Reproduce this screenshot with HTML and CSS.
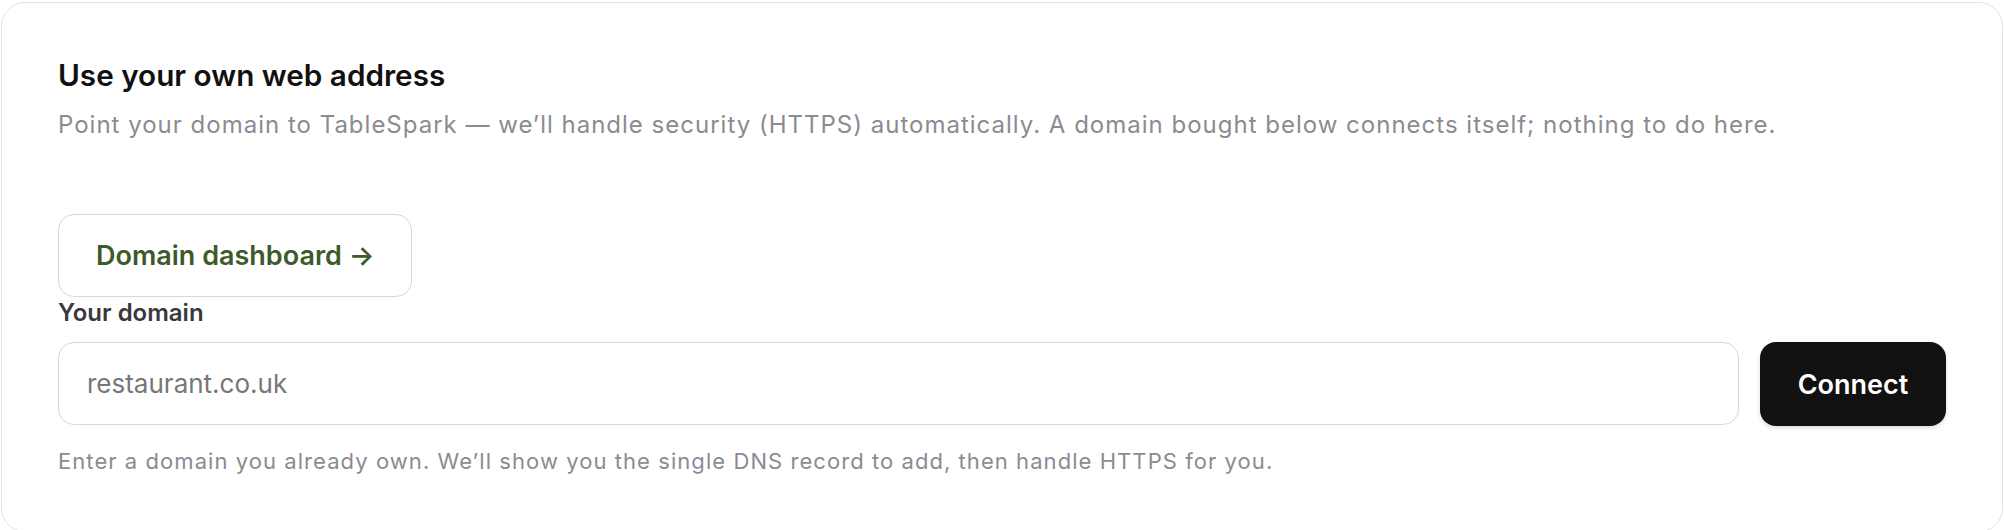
FILE: index.html
```html
<!DOCTYPE html>
<html lang="en">
<head>
<meta charset="utf-8">
<title>Use your own web address</title>
<link rel="stylesheet" href="styles.css">
</head>
<body>
<section class="card">
  <h2 class="title">Use your own web address</h2>
  <p class="subtitle">Point your domain to TableSpark — we’ll handle security (HTTPS) automatically. A domain bought below connects itself; nothing to do here.</p>
  <a class="dash-btn" href="#">Domain dashboard →</a>
  <label class="label" for="domain">Your domain</label>
  <div class="row">
    <input class="input" id="domain" type="text" placeholder="restaurant.co.uk">
    <button class="connect" type="button">Connect</button>
  </div>
  <p class="help">Enter a domain you already own. We’ll show you the single DNS record to add, then handle HTTPS for you.</p>
</section>
</body>
</html>
```
FILE: styles.css
```css
* { box-sizing: border-box; }
html, body { margin: 0; padding: 0; background: #ffffff; }
body {
  font-family: Inter, "Noto Sans", sans-serif;
  padding: 2px 1px 2px 1px;
}
.card {
  background: #ffffff;
  border: 1px solid #e4e4e7;
  border-radius: 24px;
  padding: 57px 56px 56px 56px;
  display: flex;
  flex-direction: column;
  align-items: flex-start;
}
.title {
  margin: 0;
  font-size: 29.7px;
  line-height: 30px;
  font-weight: 600;
  color: #111111;
}
.subtitle {
  margin: 21px 0 0 0;
  font-size: 24px;
  line-height: 28px;
  font-weight: 400;
  letter-spacing: 1px;
  color: #8b8b93;
}
.dash-btn {
  margin-top: 75px;
  height: 83px;
  display: inline-flex;
  align-items: center;
  padding: 0 37px;
  border: 1.5px solid #d8d8dc;
  border-radius: 16px;
  font-size: 27px;
  font-weight: 600;
  color: #3e5a2a;
  text-decoration: none;
  background: #ffffff;
}
.label {
  margin-top: 2px;
  font-size: 24px;
  line-height: 28px;
  font-weight: 600;
  color: #38383d;
}
.row {
  margin-top: 15px;
  width: 100%;
  display: flex;
  gap: 21px;
}
.input {
  flex: 1;
  height: 83px;
  border: 1.5px solid #d8d8dc;
  border-radius: 16px;
  padding: 0 28px;
  font-family: inherit;
  font-size: 26px;
  color: #111;
  background: #fff;
  outline: none;
}
.input::placeholder { color: #76767c; }
.connect {
  width: 186px;
  height: 84px;
  border: none;
  border-radius: 16px;
  background: #111111;
  color: #ffffff;
  font-family: inherit;
  font-size: 27px;
  font-weight: 600;
  box-shadow: 0 2px 4px rgba(0,0,0,0.14);
  cursor: pointer;
}
.help {
  margin: 21px 0 0 0;
  font-size: 22px;
  line-height: 28px;
  letter-spacing: 1.06px;
  color: #8b8b93;
}
```
